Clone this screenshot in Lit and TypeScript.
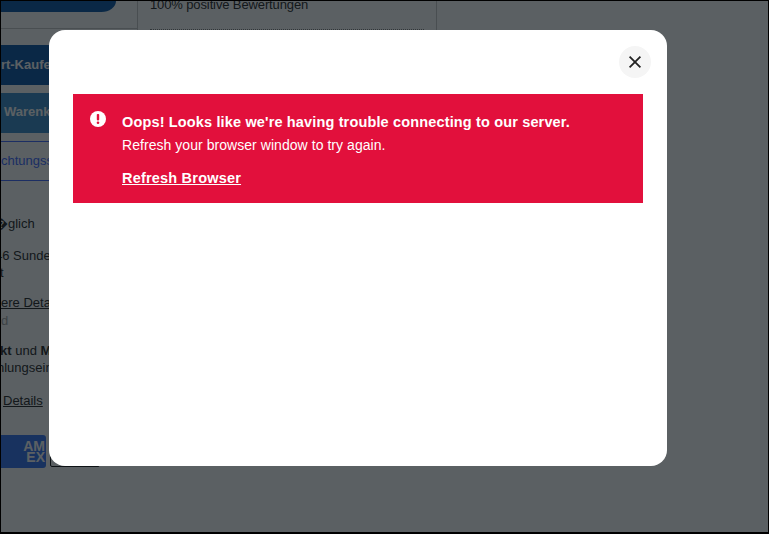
import { LitElement, html, css } from "lit";
import { customElement } from "lit/decorators.js";

@customElement("app-root")
export class AppRoot extends LitElement {
  static styles = css`
    :host {
      display: block;
      width: 769px;
      height: 534px;
      position: relative;
      overflow: hidden;
      background: #fff;
      font-family: "Liberation Sans", Arial, sans-serif;
    }
    .page {
      height: 534px;
      box-sizing: border-box;
      overflow: hidden;
      display: flex;
      padding: 1px 1px 2px;
      font-size: 13px;
      color: #333;
    }
    .left {
      flex: none;
      width: 136px;
      display: flex;
      flex-direction: column;
      white-space: nowrap;
      overflow: hidden;
    }
    .pill {
      flex: none;
      width: 115px;
      height: 11px;
      background: #1760ab;
      border-radius: 0 0 16px 0 / 0 0 12px 0;
    }
    .rule0 { height: 1px; background: #ccc; margin-top: 16px; flex: none; }
    .btn {
      flex: none;
      height: 40px;
      width: 100px;
      box-sizing: border-box;
      display: flex;
      align-items: center;
      font-size: 13px;
      font-weight: 700;
      color: #fff;
    }
    .buy { margin-top: 16px; background: #1760ab; padding-bottom: 2px; }
    .buy span { margin-left: -29px; }
    .cart { margin-top: 8px; background: #4793cd; padding: 0 0 3px 3px; }
    .tab {
      flex: none;
      margin-top: 8px;
      height: 40px;
      box-sizing: border-box;
      border-top: 1px solid #4a70ff;
      border-bottom: 1px solid #4a70ff;
      display: flex;
      align-items: center;
      color: #4a70ff;
      font-size: 13px;
      padding-bottom: 1px;
    }
    .l { line-height: 16px; flex: none; }
    .l1 { margin: 35px 0 0 -6px; }
    .l2 { margin: 16px 0 0 -6px; }
    .l3 { margin: 1px 0 0 -1px; }
    .l4 { margin-top: 14px; }
    .under { text-decoration: underline; }
    .muted { color: #aaa; }
    .l5 { margin-top: 2px; }
    .l6 { margin: 14px 0 0 -1px; }
    .l7 { margin: 1px 0 0 -4px; }
    .l8 { margin-top: 17px; padding-left: 2px; }
    .pay { display: flex; gap: 4px; margin-top: 26px; flex: none; align-items: flex-start; }
    .card {
      width: 45px;
      height: 33px;
      box-sizing: border-box;
      background: #3f7cf3;
      border-radius: 0 3px 3px 0;
      display: flex;
      justify-content: flex-end;
      align-items: center;
      padding-right: 1px;
      color: #fff;
      font-size: 14px;
      font-weight: 700;
      line-height: 11px;
      text-align: right;
    }
    .card2 { width: 50px; height: 32px; box-sizing: border-box; border: 1px solid #222; border-radius: 2px; }
    .mid {
      flex: none;
      width: 300px;
      height: 30px;
      box-sizing: border-box;
      border-left: 1px solid #ccc;
      border-right: 1px solid #ccc;
      padding: 0 12px;
      white-space: nowrap;
    }
    .mid p { margin: -4px 0 0; line-height: 16px; letter-spacing: -0.12px; }
    .dash { border-bottom: 1px dotted #888; margin-top: 16px; }
    .overlay {
      position: absolute;
      inset: 0;
      background: rgba(3, 10, 15, 0.65);
    }
    .frame {
      position: absolute;
      inset: 0;
      border: 1px solid #000;
      border-bottom-width: 2px;
      pointer-events: none;
    }
    .modal {
      position: absolute;
      left: 49px;
      top: 30px;
      width: 618px;
      height: 436px;
      box-sizing: border-box;
      background: #fff;
      border-radius: 16px;
      padding: 16px 24px 0;
      display: flex;
      flex-direction: column;
    }
    .close {
      align-self: flex-end;
      margin-right: -8px;
      width: 32px;
      height: 32px;
      border-radius: 50%;
      background: #f5f5f5;
      border: 0;
      padding: 0;
      display: flex;
      align-items: center;
      justify-content: center;
    }
    .alert {
      margin-top: 16px;
      height: 109px;
      box-sizing: border-box;
      background: #e2103c;
      color: #fff;
      display: flex;
      padding: 17px 16px 0 17px;
      gap: 16px;
    }
    .ico { flex: none; width: 16px; height: 16px; }
    .msg { padding-top: 2px; font-size: 14px; }
    .title { font-weight: 700; font-size: 14.5px; line-height: 18px; letter-spacing: 0.15px; }
    .sub { line-height: 16px; margin-top: 6px; letter-spacing: 0.05px; }
    .refresh {
      display: inline-block;
      margin-top: 17px;
      color: #fff;
      font-weight: 700;
      font-size: 14.5px;
      line-height: 16px;
      text-decoration: underline;
      letter-spacing: 0.2px;
    }
  `;

  render() {
    return html`
      <div class="page">
        <div class="left">
          <div class="pill"></div>
          <div class="rule0"></div>
          <div class="btn buy"><span>Sofort-Kaufen</span></div>
          <div class="btn cart"><span>Warenkorb</span></div>
          <div class="tab"><span>chtungsschutz</span></div>
          <div class="l l1">\uFFFDglich</div>
          <div class="l l2">46 Sunden</div>
          <div class="l l3">t</div>
          <div class="l l4 under">ere Details</div>
          <div class="l l5 muted">d</div>
          <div class="l l6"><b>kt</b> und <b>M</b></div>
          <div class="l l7">hlungsein</div>
          <div class="l l8 under">Details</div>
          <div class="pay">
            <div class="card"><span>AM<br />EX</span></div>
            <div class="card2"></div>
          </div>
        </div>
        <div class="mid">
          <p>100% positive Bewertungen</p>
          <div class="dash"></div>
        </div>
      </div>
      <div class="overlay"></div>
      <div class="frame"></div>
      <div class="modal" role="dialog">
        <button class="close" aria-label="Close">
          <svg width="14" height="14" viewBox="0 0 14 14">
            <path d="M1.6 1.6 12.4 12.4M12.4 1.6 1.6 12.4" stroke="#222" stroke-width="1.8" fill="none" />
          </svg>
        </button>
        <div class="alert">
          <svg class="ico" viewBox="0 0 16 16">
            <circle cx="8" cy="8" r="8" fill="#fff" />
            <rect x="6.8" y="3" width="2.4" height="6.4" rx="0.8" fill="#e2103c" />
            <circle cx="8" cy="11.8" r="1.3" fill="#e2103c" />
          </svg>
          <div class="msg">
            <div class="title">Oops! Looks like we're having trouble connecting to our server.</div>
            <div class="sub">Refresh your browser window to try again.</div>
            <a class="refresh">Refresh Browser</a>
          </div>
        </div>
      </div>
    `;
  }
}
